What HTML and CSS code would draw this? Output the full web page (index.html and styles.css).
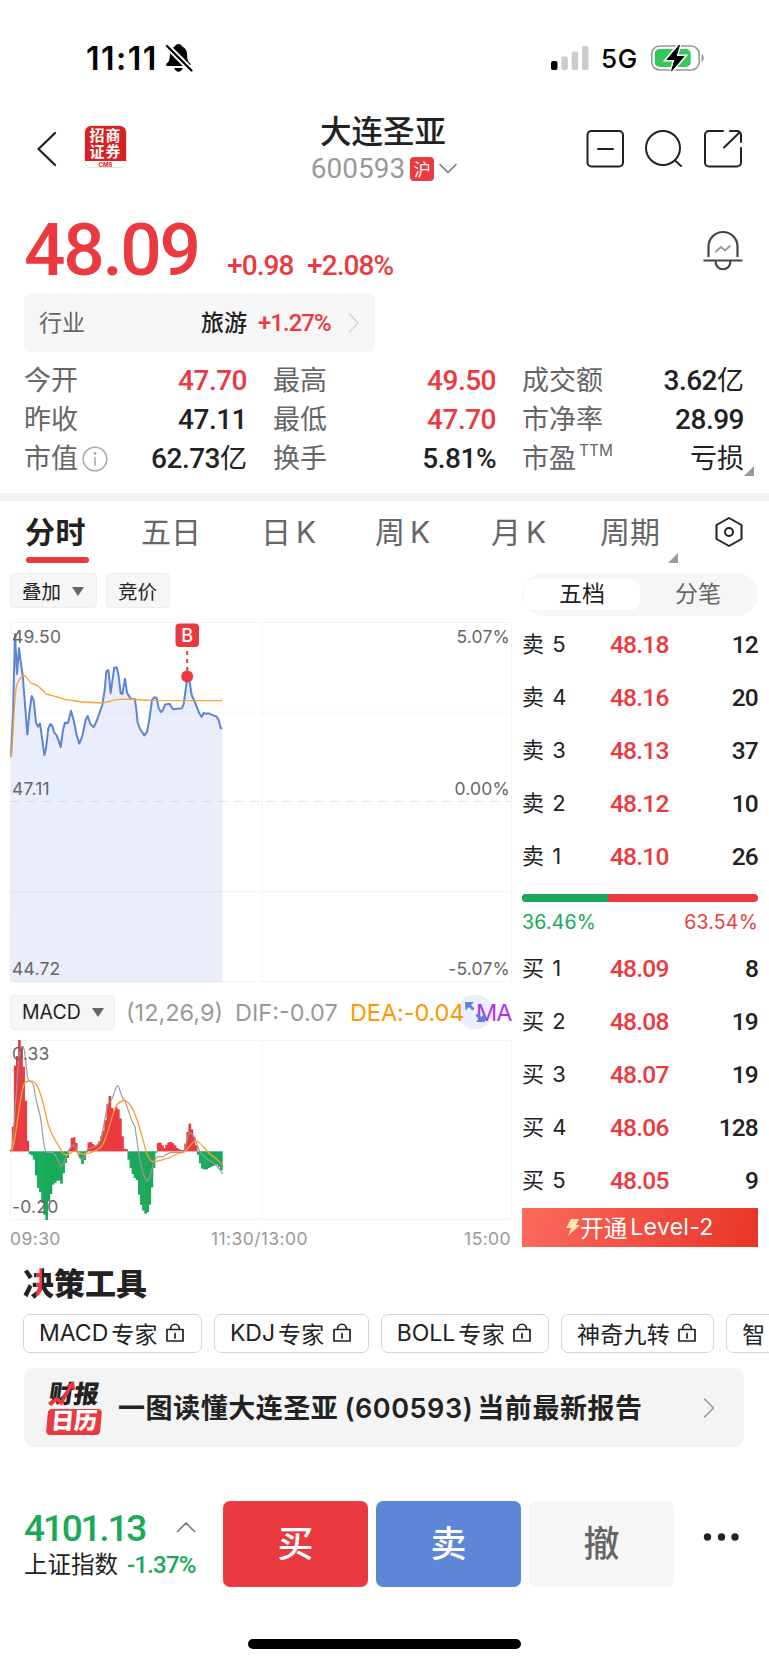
FILE: index.html
```html
<!DOCTYPE html>
<html lang="zh-CN">

<head>
    <meta charset="utf-8">
    <meta name="viewport" content="width=device-width">
    <title>大连圣亚 600593</title>
    <link rel="stylesheet" href="styles.css">
</head>

<body>
    <div class="status">
        <span class="clock">11:11</span>
        <svg class="mute" width="28" height="30" viewBox="0 0 28 30">
            <path d="M13.500 1c-2 0-3.200 1.200-3.600 2.600C6.500 5 4.900 8 4.900 12c0 4.500-1 6.500-3 8.300C.6 21.700 1 23 2.600 23h21.800c1.600 0 2-1.300.7-2.700-2-1.800-3-3.800-3-8.300 0-4-1.600-7-5-8.400C16.700 2.200 15.500 1 13.500 1zM9.300 25h8.400c-.6 2.300-2.200 3.700-4.200 3.700s-3.600-1.400-4.200-3.700z" />
            <path d="M0 1l27 27" stroke="#fff" stroke-width="6" />
            <path d="M2 3l24.500 24.500" stroke="#000" stroke-width="2.300" stroke-linecap="round" />
        </svg>
        <svg class="signal" width="40" height="26" viewBox="0 0 40 26">
            <rect x="1" y="16" width="6.500" height="9" rx="2" />
            <rect x="11.300" y="11.500" width="6.500" height="13.500" rx="2" fill="#ccc" />
            <rect x="21.700" y="6.500" width="6.500" height="18.500" rx="2" fill="#ccc" />
            <rect x="32" y="1" width="6.500" height="24" rx="2" fill="#ccc" />
        </svg>
        <span class="net">5G</span>
        <svg class="battery" width="56" height="28" viewBox="0 0 56 28">
            <rect x="1.700" y="2" width="47.500" height="24" rx="8" fill="none" stroke="#999" stroke-width="1.600" />
            <rect x="4.700" y="5" width="36" height="18" rx="5" fill="#35c759" />
            <path d="M51.500 10v8c3-1 3-7 0-8z" fill="#999" />
            <path d="M29.500 1L17 15.500h8L21.500 27 34 12.500h-8z" stroke="#fff" stroke-width="4" />
            <path d="M29.500 1L17 15.500h8L21.500 27 34 12.500h-8z" stroke="#000" stroke-width="1" stroke-linejoin="round" />
        </svg>
    </div>

    <header class="header">
        <div class="header-left">
            <svg width="22" height="38" viewBox="0 0 22 38" class="line"><path d="M19 3L2.500 19 19 35" stroke-width="2.300" /></svg>
            <div class="logo"><div class="logo-cn">招商<br>证券</div><div class="logo-en">CMS</div></div>
        </div>
        <div class="title">
            <div class="name">大连圣亚</div>
            <div class="code"><span>600593</span><i class="market">沪</i>
                <svg width="20" height="12" viewBox="0 0 20 12" class="line"><path d="M2 1.500l8 8 8-8" stroke="#777" stroke-width="1.600" /></svg>
            </div>
        </div>
        <div class="header-right">
            <svg width="40" height="40" viewBox="0 0 40 40" class="line"><rect x="2.500" y="2" width="35.500" height="35.500" rx="4" /><path d="M13 20h15" /></svg>
            <svg width="40" height="40" viewBox="0 0 40 40" class="line"><circle cx="19" cy="19" r="17" /><path d="M31 31.500l6 5.500" /></svg>
            <svg width="40" height="40" viewBox="0 0 40 40" class="line"><path d="M20 2H6a4 4 0 0 0-4 4v27.500a4 4 0 0 0 4 4h28a4 4 0 0 0 4-4V19M27 2h7a4 4 0 0 1 4 4v7M36 4L21 18.500" /></svg>
        </div>
    </header>

    <section class="quote">
        <span class="price">48.09</span>
        <span class="change">+0.98</span>
        <span class="change change-pct">+2.08%</span>
        <svg class="alert" width="42" height="42" viewBox="0 0 42 42">
            <path d="M6.500 27V16.500a14.500 14.500 0 0 1 29 0V27M1.500 30.500h39M13.500 31c0 11 15 11 15 0" fill="none" stroke="#444" stroke-width="2.200" />
            <path d="M13.500 22l5.500-5 4 3.500 5.500-5" fill="none" stroke="#999" stroke-width="2" />
        </svg>
    </section>

    <div class="industry">
        <span class="grey">行业</span>
        <b>旅游</b>
        <span class="industry-pct">+1.27%</span>
        <svg width="12" height="22" viewBox="0 0 12 22" class="line"><path d="M1.500 2l8.500 9-8.500 9" stroke="#d4d4d4" stroke-width="1.600" /></svg>
    </div>

    <section class="stats">
        <div class="stat"><span>今开</span><b class="red">47.70</b></div>
        <div class="stat"><span>最高</span><b class="red">49.50</b></div>
        <div class="stat"><span>成交额</span><b>3.62<em>亿</em></b></div>
        <div class="stat"><span>昨收</span><b>47.11</b></div>
        <div class="stat"><span>最低</span><b class="red">47.70</b></div>
        <div class="stat"><span>市净率</span><b>28.99</b></div>
        <div class="stat"><span>市值</span>
            <svg class="info" width="26" height="26" viewBox="0 0 26 26"><circle cx="13" cy="13" r="11.800" fill="none" stroke="#aaa" stroke-width="1.600" /><circle cx="13" cy="7.500" r="1.400" fill="#aaa" /><path d="M13 11v8.500" stroke="#aaa" stroke-width="1.600" /></svg>
            <b>62.73<em>亿</em></b></div>
        <div class="stat"><span>换手</span><b>5.81%</b></div>
        <div class="stat last"><span>市盈<sup>TTM</sup></span><b><em>亏损</em></b></div>
    </section>

    <nav class="tabs">
        <div class="tab active">分时</div>
        <div class="tab">五日</div>
        <div class="tab">日<i>K</i></div>
        <div class="tab">周<i>K</i></div>
        <div class="tab">月<i>K</i></div>
        <div class="tab more">周期</div>
        <svg width="30" height="32" viewBox="0 0 30 32" class="line"><path d="M15 2l12.500 7v14L15 30 2.500 23V9z" /><circle cx="15" cy="16" r="4" /></svg>
    </nav>

    <main class="main">
        <div class="charts">
            <div class="tools">
                <div class="pill">叠加 <i class="caret"></i></div>
                <div class="pill">竞价</div>
            </div>
            <svg class="chart" width="503" height="361" viewBox="0 0 503 361">
                <path d="M.5.500h501v359H.5zM252 0v360M0 90h501M0 269.500h501" class="grid" />
                <path d="M0 179.500h501" class="grid dashed" />
                <g transform="translate(-10 -122) scale(.33333)">
                    <path d="M33 770L39 640 42 520 45 402 51 522 57 444 62 485 68 525 74 600 82 703 88 640 95 588 101 600 108 668 114 680 120 671 127 720 133 765 138 745 145 685 151 672 157 678 163 698 170 706 176 722 182 741 189 690 195 668 204 669 213 632 222 665 230 705 238 731 247 708 257 660 263 648 271 672 281 682 291 660 307 615 314 570 319 514 325 510 332 579 338 535 343 503 350 502 356 528 362 580 367 582 375 536 381 578 392 596 405 598 409 630 413 668 420 687 433 706 441 696 447 665 456 600 463 592 470 594 476 625 483 636 489 630 495 614 508 611 519 628 545 625 551 613 561 540 568 540 575 585 585 607 598 640 605 651 611 639 618 641 625 640 640 646 650 650 656 660 662 684 667 686V1446H31z" fill="#5a7de8" fill-opacity=".13" />
                    <path d="M33 770L39 640 42 520 45 402 51 522 57 444 62 485 68 525 74 600 82 703 88 640 95 588 101 600 108 668 114 680 120 671 127 720 133 765 138 745 145 685 151 672 157 678 163 698 170 706 176 722 182 741 189 690 195 668 204 669 213 632 222 665 230 705 238 731 247 708 257 660 263 648 271 672 281 682 291 660 307 615 314 570 319 514 325 510 332 579 338 535 343 503 350 502 356 528 362 580 367 582 375 536 381 578 392 596 405 598 409 630 413 668 420 687 433 706 441 696 447 665 456 600 463 592 470 594 476 625 483 636 489 630 495 614 508 611 519 628 545 625 551 613 561 540 568 540 575 585 585 607 598 640 605 651 611 639 618 641 625 640 640 646 650 650 656 660 662 684 667 686" class="curve" stroke="#5b84d6" stroke-width="6" />
                    <path d="M33 772C40 720 42 590 50 555 56 540 64 527 74 527 82 530 86 546 94 550 115 555 120 562 138 582 155 588 165 587 195 599 220 600 230 604 250 606 280 608 300 609 310 608 330 605 340 599 355 598 380 597 410 598 450 601L667 602" class="curve" stroke="#fca130" stroke-width="4" />
                </g>
                <rect x="165.500" y="1.500" width="23.500" height="23.500" rx="4" fill="#ea3a40" />
                <text x="177.200" y="20" class="mark">B</text>
                <path d="M177.200 29v20" stroke="#ea3a40" stroke-width="2" stroke-dasharray="4 4" />
                <circle cx="177.200" cy="54.500" r="6" fill="#ea3a40" />
                <text x="2" y="20.500">49.50</text>
                <text x="2" y="173">47.11</text>
                <text x="2" y="353">44.72</text>
                <text x="500" y="20.500" text-anchor="end">5.07%</text>
                <text x="500" y="173" text-anchor="end">0.00%</text>
                <text x="500" y="353" text-anchor="end">-5.07%</text>
            </svg>
            <div class="indicator">
                <div class="pill">MACD <i class="caret"></i></div>
                <span class="param">(12,26,9)</span>
                <span class="dif">DIF:-0.07</span>
                <span class="dea">DEA:-0.04</span>
                <span class="macd">MA</span>
                <svg class="expand" width="36" height="36" viewBox="0 0 36 36"><circle cx="18" cy="18" r="17.500" fill="#5b84d6" fill-opacity=".13" /><path d="M8 8h9l-3 3 3.500 3.500-2 2L12 13l-3.500 3.500zM28 28h-9l3-3-3.500-3.500 2-2L24 23l3.500-3.500z" fill="#5b84d6" /></svg>
            </div>
            <svg class="chart" width="503" height="181" viewBox="0 0 503 181">
                <path d="M.5.500h501v179H.5zM252 0v180" class="grid" />
                <g transform="translate(-10 -80) scale(.33333)">
                    <g id="bars"></g>
                    <path d="M33 577C42 540 44 440 49 400 52 340 56 270 63 262 70 253 72 262 77 300 80 330 82 360 87 363 94 364 98 368 101 378 108 430 116 445 121 470 130 530 130 560 138 577H157C170 582 175 610 183 619 192 615 196 600 208 568 214 556 222 548 228 565 235 585 238 598 246 600 254 595 256 575 262 568 278 562 290 562 300 545 312 510 318 440 327 425 338 430 345 377 353 377 360 380 362 415 375 422 384 450 395 485 405 500 415 570 425 655 442 664 455 650 455 615 465 598 472 585 480 592 490 590 500 580 510 577 520 577H550C560 560 562 520 570 517 585 520 590 560 600 575 620 605 640 604 650 618 660 626 664 636 668 643" class="curve" stroke="#999" stroke-width="3.500" />
                    <path d="M33 576C48 560 54 430 72 372 76 362 94 360 102 366 125 385 135 460 145 495 160 540 180 560 186 577 194 588 206 586 216 576 228 567 234 580 250 583 270 582 300 570 310 550 326 520 334 465 350 435 362 420 378 417 388 432 412 460 422 520 432 550 440 585 450 604 460 605 480 604 484 598 500 596 518 592 525 579 552 577 568 565 575 543 590 543 605 550 620 575 635 586 650 595 658 606 668 615" class="curve" stroke="#fca130" stroke-width="4" />
                </g>
                <text x="2" y="20">0.33</text>
                <text x="2" y="173">-0.20</text>
            </svg>
            <div class="times"><span>09:30</span><span>11:30/13:00</span><span>15:00</span></div>
        </div>

        <aside class="book">
            <div class="switch"><span class="on">五档</span><span>分笔</span></div>
            <div class="orders">
                <div class="order"><span>卖 5</span><b class="red">48.18</b><b>12</b></div>
                <div class="order"><span>卖 4</span><b class="red">48.16</b><b>20</b></div>
                <div class="order"><span>卖 3</span><b class="red">48.13</b><b>37</b></div>
                <div class="order"><span>卖 2</span><b class="red">48.12</b><b>10</b></div>
                <div class="order"><span>卖 1</span><b class="red">48.10</b><b>26</b></div>
            </div>
            <div class="ratio"><div class="ratio-sell" style="width:36.46%"></div></div>
            <div class="ratio-text"><span class="green">36.46%</span><span class="red">63.54%</span></div>
            <div class="orders">
                <div class="order"><span>买 1</span><b class="red">48.09</b><b>8</b></div>
                <div class="order"><span>买 2</span><b class="red">48.08</b><b>19</b></div>
                <div class="order"><span>买 3</span><b class="red">48.07</b><b>19</b></div>
                <div class="order"><span>买 4</span><b class="red">48.06</b><b>128</b></div>
                <div class="order"><span>买 5</span><b class="red">48.05</b><b>9</b></div>
            </div>
            <div class="level2">
                <svg width="14" height="17" viewBox="0 0 14 17"><path d="M5 0h8l-3 6h4L2 17l3-8H0z" fill="#ffe3b0" /></svg>
                开通<i>Level-2</i>
            </div>
        </aside>
    </main>

    <h2 class="heading"><span>决</span>策工具</h2>
    <div class="chips">
        <div class="chip"><i>MACD</i>专家<svg width="18" height="20" viewBox="0 0 18 20" class="line"><use href="#lock" /></svg></div>
        <div class="chip"><i>KDJ</i>专家<svg width="18" height="20" viewBox="0 0 18 20" class="line"><use href="#lock" /></svg></div>
        <div class="chip"><i>BOLL</i>专家<svg width="18" height="20" viewBox="0 0 18 20" class="line"><use href="#lock" /></svg></div>
        <div class="chip">神奇九转<svg width="18" height="20" viewBox="0 0 18 20" class="line"><path id="lock" d="M1 6.500h16v11.500H1zM4.500 6.500c0-7 9-7 9 0M9 10.500v4.500" stroke-width="1.700" /></svg></div>
        <div class="chip">智</div>
    </div>

    <div class="report">
        <div class="report-icon">
            <div class="ri-top">财报</div>
            <div class="ri-bottom">日历</div>
            <svg width="28" height="26" viewBox="0 0 28 26"><path d="M1 24l6-6 5 4L22 5" fill="none" stroke="#ea3a40" stroke-width="3.500" /><path d="M17 5l8-5 1 9z" fill="#ea3a40" /></svg>
        </div>
        <b>一图读懂大连圣亚<i>(600593)</i>当前最新报告</b>
        <svg width="12" height="22" viewBox="0 0 12 22" class="line"><path d="M1.500 2l9 9-9 9" stroke="#999" stroke-width="1.600" /></svg>
    </div>

    <footer class="footer">
        <div class="index">
            <div class="index-top"><span>4101.13</span>
                <svg width="20" height="12" viewBox="0 0 20 12" class="line"><path d="M1.500 10.500L10 2l8.500 8.500" stroke="#777" stroke-width="1.600" /></svg>
            </div>
            <div class="index-bottom">上证指数<i>-1.37%</i></div>
        </div>
        <div class="btn buy">买</div>
        <div class="btn sell">卖</div>
        <div class="btn cancel">撤</div>
        <svg class="dots" width="36" height="10" viewBox="0 0 36 10"><circle cx="4.500" cy="5" r="3.700" /><circle cx="18.500" cy="5" r="3.700" /><circle cx="32" cy="5" r="3.700" /></svg>
    </footer>
    <div class="home"></div>

    <script>
        // one bar per minute, drawn from the zero line at y = 574
        let bars = [5, 74, 257, 286, 334, 315, 254, 152, 32, -8, -12, -25, -72, -110, -122, -155, -190, -206, -150, -128,
            -100, -95, -88, -88, -97, -66, -35, -20, 8, 40, 42, 25, -3, -20, -38, -26, -3, 26, 28, 22, 17, 18, 30, 45, 62,
            93, 142, 166, 130, 122, 133, 126, 99, 45, 8, 6, -25, -50, -68, -80, -86, -130, -161, -178, -187, -183, -160,
            -108, -50, -4, 25, 26, 18, 10, 20, 27, 28, 24, 18, 10, 6, 4, 4, 23, 58, 83, 66, 44, 18, -10, -36, -52, -54,
            -54, -50, -47, -44, -42, -40, -46, -57]

        document.getElementById('bars').innerHTML = bars.map((v, i) => {
            let top = v > 0 ? 574 - v : 574
            return `<rect x="${29 + i * 6.31}" y="${top}" width="8" height="${Math.abs(v)}" fill="${v > 0 ? '#ea3a40' : '#18a95b'}"/>`
        }).join('')
    </script>
</body>

</html>
```
FILE: styles.css
```css
* {
    box-sizing: border-box;
}

body {
    margin: 0;
    width: 769px;
    height: 1665px;
    overflow: hidden;
    background: #fff;
    color: #222;
    font-family: Inter, "Noto Sans CJK SC", sans-serif;
}

i, em {
    font-style: normal;
}

svg {
    display: block;
    flex: none;
}

.line {
    fill: none;
    stroke: #222;
    stroke-width: 2;
    stroke-linecap: round;
    stroke-linejoin: round;
}

.red {
    color: #ea3a40;
}

.green {
    color: #18a95b;
}

.status {
    display: flex;
    align-items: center;
    height: 116px;
    padding-left: 86px;
    color: #000;
}

.clock {
    width: 79px;
    font-size: 32px;
    font-weight: 600;
    letter-spacing: 1.5px;
}

.signal {
    margin-left: 357px;
}

.net {
    width: 60px;
    padding-left: 11px;
    font-size: 26px;
    font-weight: 500;
    letter-spacing: .6px;
}

.header {
    display: grid;
    grid-template-columns: 280px 1fr 280px;
    height: 90px;
}

.header-left {
    display: flex;
    align-items: flex-start;
    gap: 26px;
    padding: 14px 0 0 36px;
}

.logo {
    width: 43px;
    height: 43px;
    margin-top: -5px;
    border: 1px solid #e4e4e4;
    border-radius: 7px;
    overflow: hidden;
    background: #fff;
    text-align: center;
}

.logo-cn {
    height: 35px;
    padding-top: 2px;
    background: #da2020;
    color: #fff;
    font-size: 15px;
    font-weight: 700;
    line-height: 16px;
    letter-spacing: 1px;
}

.logo-en {
    color: #da2020;
    font-size: 6px;
    font-weight: 700;
    line-height: 7px;
}

.title {
    text-align: center;
}

.name {
    height: 34px;
    margin: -1px 3px 0 0;
    font-size: 31.5px;
    font-weight: 500;
    line-height: 34px;
}

.code {
    display: flex;
    align-items: center;
    justify-content: center;
    height: 40px;
    color: #999;
    font: 28px/40px Roboto, sans-serif;
}

.market {
    width: 24px;
    height: 24px;
    margin: 0 4px 0 5px;
    border-radius: 4px;
    background: #ea3a40;
    color: #fff;
    font: 17px/23px "Noto Sans CJK SC", sans-serif;
}

.header-right {
    display: flex;
    gap: 19px;
    padding: 13px 0 0 96px;
}

.quote {
    display: flex;
    align-items: baseline;
    height: 87px;
    padding-left: 24px;
    color: #ea3a40;
    font-family: Roboto, sans-serif;
    font-weight: 500;
}

.price {
    width: 203px;
    font-size: 73px;
    line-height: 88px;
    letter-spacing: -2.3px;
}

.change {
    width: 80px;
    font-size: 28px;
    letter-spacing: -.9px;
}

.change-pct {
    width: 395px;
}

.alert {
    align-self: flex-start;
    margin-top: 24px;
}

.industry {
    display: flex;
    align-items: center;
    width: 351px;
    height: 59px;
    margin-left: 24px;
    padding: 0 15px;
    border-radius: 7px;
    background: #f6f6f6;
    font-size: 23px;
    line-height: 58px;
}

.industry b {
    margin-left: auto;
    font-weight: 500;
}

.industry .industry-pct {
    width: 74px;
    margin: 0 16px 0 11px;
    color: #ea3a40;
    font: 500 24px Roboto, sans-serif;
    letter-spacing: -1px;
}

.grey {
    color: #666;
}

.stats {
    display: grid;
    grid-template-columns: 223px 223px 222px;
    grid-auto-rows: 39px;
    column-gap: 26px;
    height: 149px;
    padding: 9px 0 0 24px;
    border-bottom: 8px solid #f4f4f4;
}

.stat {
    display: flex;
    align-items: center;
    height: 39px;
}

.stat span {
    color: #666;
    font-size: 27px;
    line-height: 39px;
}

.stat b {
    margin-left: auto;
    font: 500 28px/39px Roboto, "Noto Sans CJK SC", sans-serif;
    letter-spacing: -.5px;
}

.stat em {
    font-size: 27px;
    font-weight: 400;
    letter-spacing: 0;
}

.stat sup {
    margin-left: 3px;
    font-size: 15.5px;
    line-height: 10px;
    vertical-align: 12px;
}

.info {
    margin-left: 4px;
}

.last {
    position: relative;
}

.last::after, .more::after {
    content: "";
    position: absolute;
    right: -10px;
    bottom: 2px;
    border-left: 10px solid transparent;
    border-bottom: 10px solid #999;
}

.tabs {
    display: grid;
    grid-template-columns: 116px 120px 114px 116px 109px 114px 30px;
    height: 72px;
    padding-left: 25px;
    color: #666;
    font-size: 30px;
    line-height: 62px;
}

.tab {
    position: relative;
}

.tab i {
    margin-left: 5px;
    font-size: 30px;
}

.tabs svg {
    margin-top: 15px;
}

.active {
    color: #222;
    font-weight: 700;
    letter-spacing: .5px;
}

.active::after {
    content: "";
    position: absolute;
    left: 1px;
    top: 56px;
    width: 63px;
    height: 6px;
    border-radius: 3px;
    background: #ea3a40;
}

.more::after {
    right: 36px;
    bottom: 10px;
}

.main {
    display: grid;
    grid-template-columns: 503px 236px;
    column-gap: 9px;
    height: 682px;
    padding-left: 10px;
}

.tools {
    display: flex;
    gap: 9px;
    height: 49px;
}

.pill {
    display: flex;
    align-items: center;
    flex: none;
    height: 35px;
    padding: 0 12px 1px 11px;
    border: 1px solid #eee;
    border-radius: 4px;
    background: #f6f6f6;
    font-size: 19.5px;
    white-space: nowrap;
}

.caret {
    margin: 2px 0 0 11px;
    border: 6px solid transparent;
    border-top: 9px solid #666;
    border-bottom: 0;
}

.chart {
    overflow: visible;
}

.chart text {
    fill: #666;
    font: 17.5px Inter, sans-serif;
    letter-spacing: .2px;
}

.chart .mark {
    fill: #fff;
    font-size: 18px;
    font-weight: 500;
    text-anchor: middle;
}

.grid {
    fill: none;
    stroke: #f4f4f4;
}

.dashed {
    stroke: #e4e4ea;
    stroke-dasharray: 9 7;
}

.curve {
    fill: none;
    stroke-linejoin: round;
}

.indicator {
    position: relative;
    display: flex;
    align-items: center;
    height: 57px;
    padding-top: 1px;
    font-size: 23.5px;
    white-space: nowrap;
}

.indicator .pill {
    width: 105px;
}

.param, .dif {
    color: #999;
}

.param {
    width: 120px;
    padding-left: 11px;
}

.dif {
    width: 115px;
}

.dea {
    width: 126px;
    color: #ff9800;
    letter-spacing: -.1px;
}

.macd {
    width: 37px;
    color: #b530e8;
    letter-spacing: -1px;
}

.expand {
    position: absolute;
    left: 447px;
    top: 11px;
}

.times {
    display: grid;
    grid-template-columns: 201px 1fr auto;
    width: 501px;
    padding-top: 7px;
    color: #999;
    font-size: 17.5px;
    line-height: 22px;
    letter-spacing: .4px;
}

.switch {
    display: flex;
    align-items: center;
    height: 43px;
    padding: 2px;
    border-radius: 22px;
    background: #f6f6f6;
    color: #666;
    font-size: 23px;
    line-height: 31px;
    text-align: center;
}

.switch span {
    flex: 1;
}

.switch .on {
    border-radius: 9px;
    background: #fff;
    color: #222;
}

.orders {
    padding-top: 2px;
}

.order {
    display: grid;
    grid-template-columns: 88px 70px 1fr;
    height: 53px;
    line-height: 53px;
}

.order span {
    font-size: 22px;
    word-spacing: 2px;
}

.order b {
    font: 500 24.5px/53px Roboto, sans-serif;
    letter-spacing: -.8px;
}

.order b:last-child {
    text-align: right;
}

.ratio {
    height: 8px;
    margin-top: 11px;
    border-radius: 4px;
    overflow: hidden;
    background: #ea3a40;
}

.ratio-sell {
    height: 8px;
    background: #18a95b;
}

.ratio-text {
    display: flex;
    justify-content: space-between;
    height: 38px;
    font-size: 19.5px;
    line-height: 40px;
    letter-spacing: .2px;
}

.level2 {
    display: flex;
    align-items: center;
    justify-content: center;
    height: 39px;
    margin-top: 1px;
    padding-bottom: 1px;
    background: linear-gradient(100deg, #fb6a5e, #e93527);
    color: #fff;
    font-size: 23.5px;
}

.level2 i {
    margin-left: 3px;
    font-size: 23px;
    letter-spacing: .3px;
}

.heading {
    margin: 12px 0 0 23px;
    font-size: 31px;
    font-weight: 900;
    line-height: 34px;
}

.heading span {
    background: linear-gradient(90deg, #222 42%, #ea3a40 42%, #ea3a40 60%, #222 60%);
    -webkit-background-clip: text;
    color: transparent;
}

.chips {
    display: flex;
    gap: 12px;
    margin-top: 13px;
    padding-left: 23px;
    overflow: hidden;
}

.chip {
    display: flex;
    align-items: center;
    flex: none;
    height: 39px;
    padding: 0 17px 2px 15px;
    border: 1px solid #d4d4d4;
    border-radius: 7px;
    font-size: 23px;
    letter-spacing: .3px;
}

.chip i {
    margin-right: 3px;
    letter-spacing: 0;
}

.chip svg {
    margin-left: 8px;
}

.report {
    display: flex;
    align-items: center;
    width: 720px;
    height: 79px;
    margin: 15px 0 0 24px;
    padding: 0 29px 0 23px;
    border-radius: 10px;
    background: #f4f4f4;
    font-size: 27px;
    white-space: nowrap;
}

.report b {
    margin: -2px auto 0 17px;
    font-weight: 600;
    letter-spacing: .55px;
}

.report b i {
    margin: 0 4px 0 6px;
}

.report-icon {
    position: relative;
    width: 54px;
    height: 54px;
    font-weight: 900;
    text-align: center;
}

.ri-top {
    height: 28px;
    font-size: 25px;
    line-height: 27px;
    transform: skewX(-8deg);
}

.ri-bottom {
    height: 26px;
    border-radius: 4px;
    background: #ea3a40;
    color: #fff;
    font-size: 23px;
    line-height: 24px;
    transform: skewX(-5deg);
}

.report-icon svg {
    position: absolute;
    left: 2px;
    top: 0;
}

.footer {
    display: grid;
    grid-template-columns: 191px 145px 145px 145px 40px;
    column-gap: 8px;
    height: 86px;
    margin-top: 54px;
    padding-left: 24px;
}

.index-top {
    display: flex;
    align-items: center;
    justify-content: space-between;
    width: 172px;
    height: 40px;
    margin-top: 6px;
    color: #18a95b;
    font: 500 37px/40px Roboto, sans-serif;
    letter-spacing: -2.2px;
}

.index-top span {
    margin-top: 3px;
}

.index-bottom {
    height: 34px;
    font-size: 23.5px;
    line-height: 36px;
    white-space: nowrap;
}

.index-bottom i {
    margin-left: 9px;
    color: #18a95b;
    font: 500 24px Roboto, sans-serif;
    letter-spacing: -.8px;
}

.btn {
    height: 86px;
    border-radius: 7px;
    color: #fff;
    font-size: 36px;
    font-weight: 500;
    line-height: 86px;
    text-align: center;
}

.buy {
    background: #ea3a40;
}

.sell {
    background: #5e86d6;
}

.cancel {
    background: #f6f6f6;
    color: #666;
}

.dots {
    margin: 31px 0 0 21px;
    fill: #222;
}

.home {
    width: 273px;
    height: 10px;
    margin: 52px 0 0 248px;
    border-radius: 5px;
    background: #000;
}
```
